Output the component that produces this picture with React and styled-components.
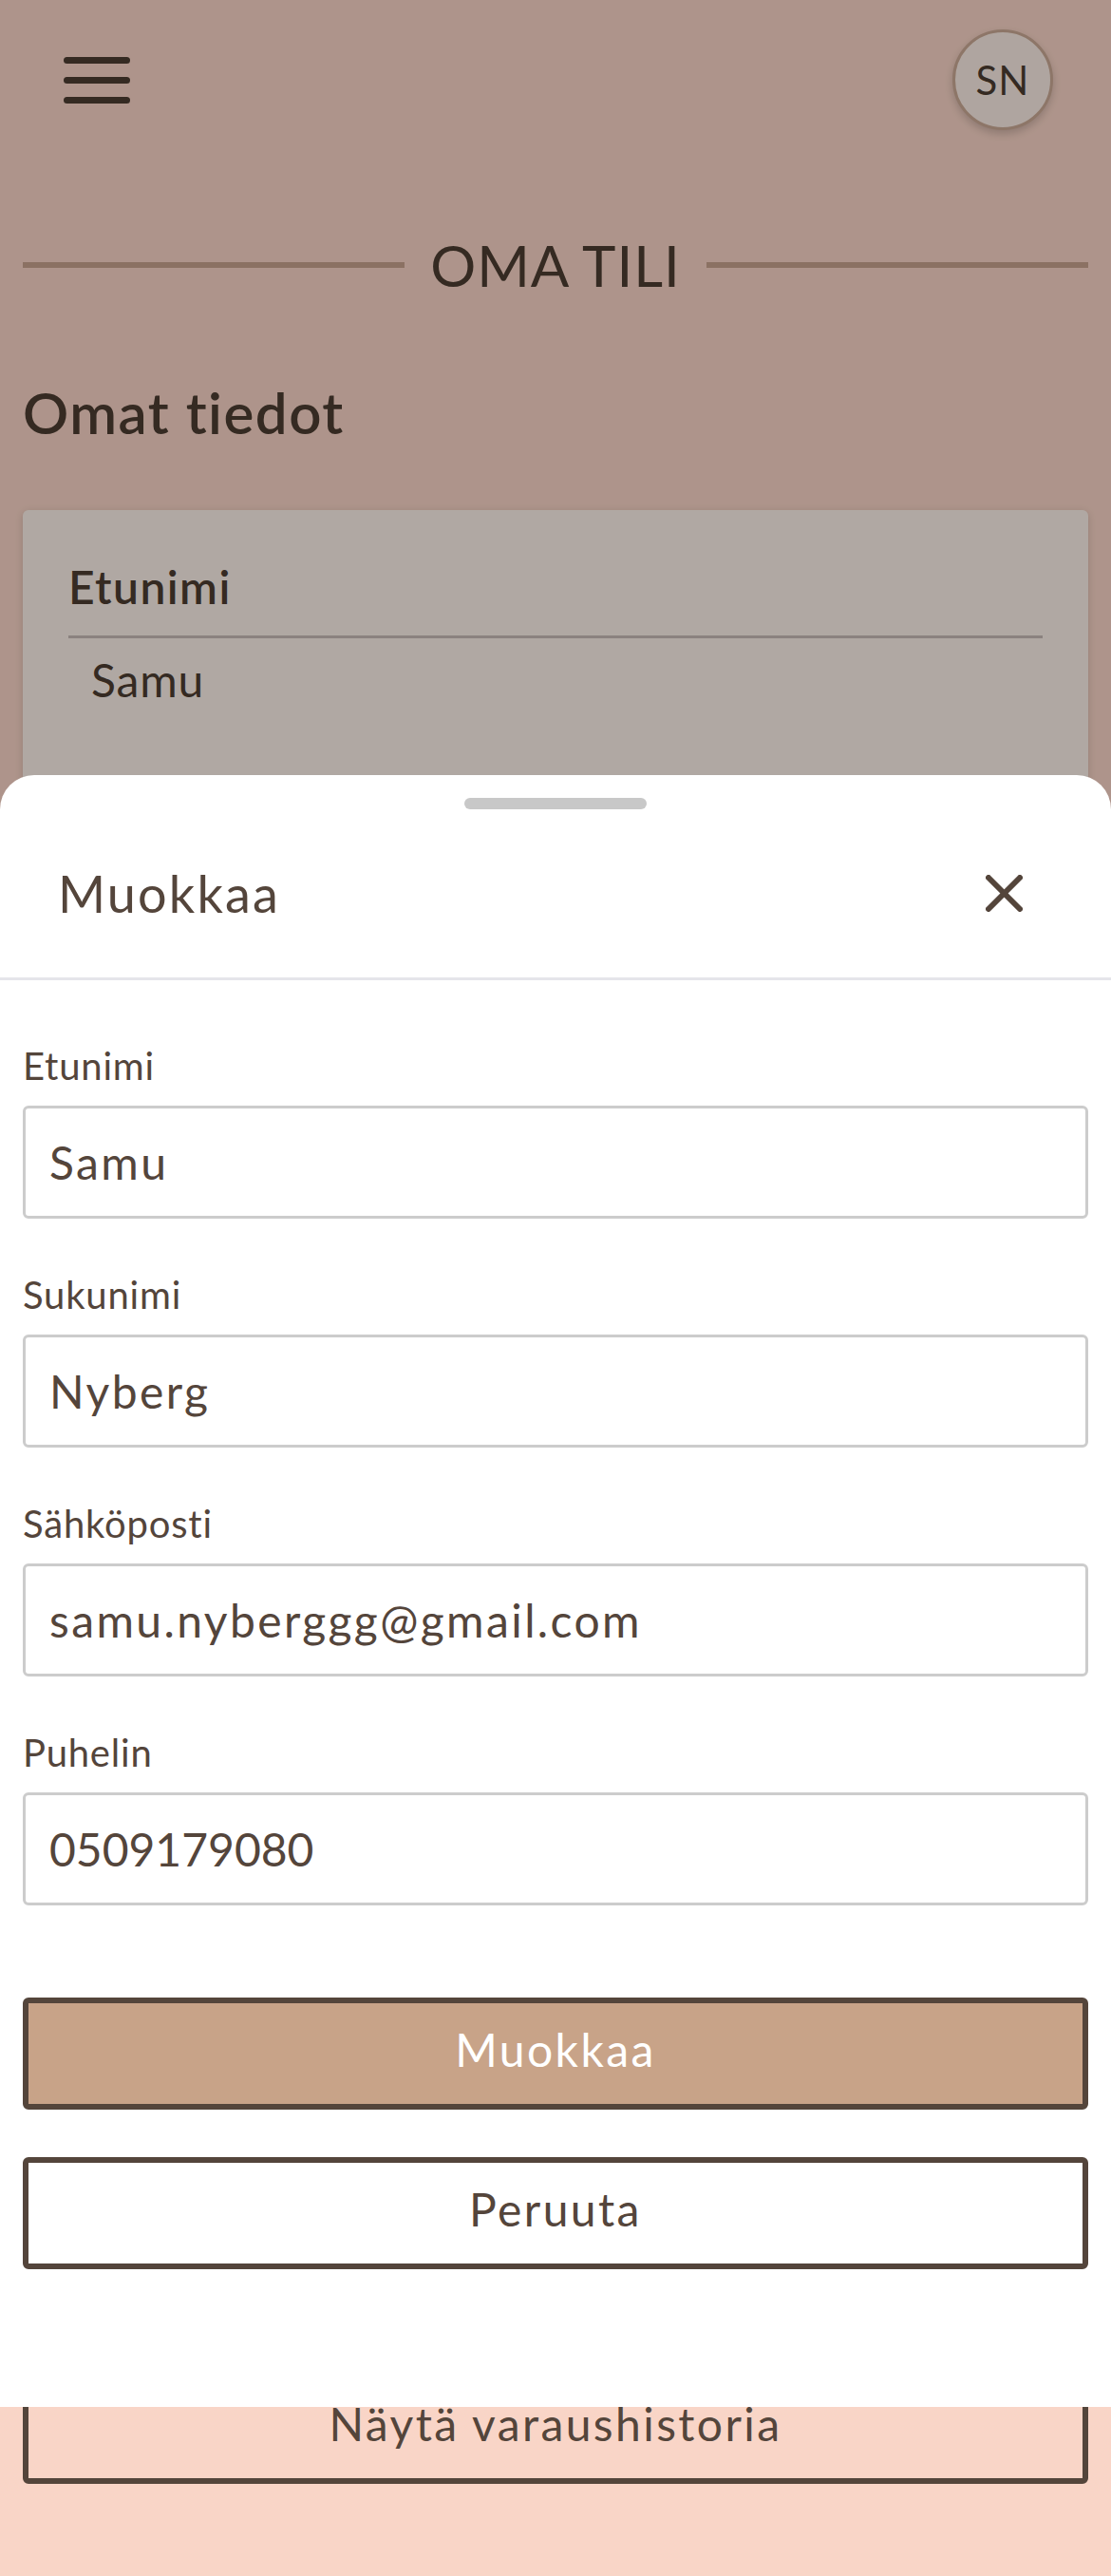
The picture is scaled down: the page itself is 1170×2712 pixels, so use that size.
import React from "react";
import styled, { createGlobalStyle } from "styled-components";

const GlobalStyle = createGlobalStyle`
  html, body { margin: 0; padding: 0; }
  * { box-sizing: border-box; }
  body {
    font-family: Lato, "Open Sans", "Noto Sans", sans-serif;
    background: #f9d5c7;
    color: #4c3d32;
    letter-spacing: 0.05em;
  }
`;

const Page = styled.div`
  position: relative;
  min-height: 2712px;
  display: flex;
  flex-direction: column;
  padding: 0 24px 97px;
`;

const Header = styled.header`
  display: flex;
  align-items: center;
  justify-content: space-between;
  padding: 31px 37px 0 43px;
`;

const IconButton = styled.button`
  display: flex;
  align-items: center;
  justify-content: center;
  padding: 0;
  border: none;
  background: transparent;
  color: ${(p) => p.$color || "#4c3d32"};
  cursor: pointer;
`;

const Avatar = styled.div`
  width: 106px;
  height: 106px;
  border-radius: 50%;
  background: #fbede5;
  border: 3px solid #cba995;
  box-shadow: 0 4px 8px rgba(0, 0, 0, 0.18);
  display: flex;
  align-items: center;
  justify-content: center;
  font-size: 42px;
  color: #4c3d32;
  letter-spacing: 1px;
`;

const TitleRow = styled.div`
  margin-top: 106px;
  display: flex;
  align-items: center;
  gap: 27px;
`;

const TitleLine = styled.span`
  flex: 1;
  height: 6px;
  background: #c7a38f;
`;

const PageTitle = styled.h1`
  margin: 0;
  font-size: 60px;
  line-height: 72px;
  font-weight: 400;
  letter-spacing: 1px;
  color: #4c3d32;
`;

const SectionHeading = styled.h2`
  margin: 83px 0 0;
  font-size: 60px;
  line-height: 72px;
  font-weight: 600;
  letter-spacing: 0.025em;
  color: #4c3d32;
`;

const InfoCard = styled.section`
  margin-top: 67px;
  background: #fdf1ea;
  border-radius: 6px;
  box-shadow: 0 2px 8px rgba(0, 0, 0, 0.15);
  padding: 52px 48px;
`;

const InfoField = styled.div`
  & + & {
    margin-top: 120px;
  }
`;

const InfoLabel = styled.div`
  font-size: 48px;
  line-height: 58px;
  font-weight: 600;
  letter-spacing: 0.03em;
  color: #4c3d32;
`;

const InfoDivider = styled.div`
  height: 3px;
  background: #c8bbb7;
  margin: 22px 0 16px;
`;

const InfoValue = styled.div`
  font-size: 48px;
  line-height: 56px;
  padding-left: 24px;
  color: #4c3d32;
`;

const OutlineButton = styled.button`
  width: 100%;
  height: 118px;
  border: 6px solid #54453b;
  border-radius: 6px;
  background: ${(p) => p.$bg || "transparent"};
  color: ${(p) => p.$fg || "#54453b"};
  font-family: inherit;
  font-size: 48px;
  letter-spacing: 0.05em;
  line-height: 1;
  padding: 0 0 8px;
  cursor: pointer;
`;

const BottomAction = styled.div`
  margin-top: auto;
`;

const Overlay = styled.div`
  position: absolute;
  top: 0;
  left: 0;
  right: 0;
  height: 2534px;
  background: rgba(0, 0, 0, 0.3);
  display: flex;
  flex-direction: column;
  justify-content: flex-end;
`;

const Sheet = styled.div`
  background: #ffffff;
  border-radius: 36px 36px 0 0;
  color: #54453b;
`;

const Handle = styled.div`
  width: 192px;
  height: 12px;
  border-radius: 6px;
  background: #c8c8c8;
  margin: 24px auto 0;
`;

const SheetHeader = styled.div`
  height: 180px;
  display: flex;
  align-items: center;
  justify-content: space-between;
  padding: 0 93px 0 61px;
  border-bottom: 3px solid #e5e5ea;
`;

const SheetTitle = styled.h3`
  margin: 0;
  font-size: 54px;
  line-height: 64px;
  font-weight: 400;
  letter-spacing: 0.04em;
  color: #54453b;
`;

const Form = styled.form`
  padding: 66px 24px 145px;
`;

const Field = styled.label`
  display: block;
  & + & {
    margin-top: 56px;
  }
`;

const FieldLabel = styled.span`
  display: block;
  font-size: 40px;
  line-height: 48px;
  margin-bottom: 18px;
  color: #54453b;
`;

const TextInput = styled.input`
  display: block;
  width: 100%;
  height: 119px;
  border: 3px solid #cccccc;
  border-radius: 6px;
  padding: 0 25px;
  font-family: inherit;
  font-size: 48px;
  letter-spacing: ${(p) => (p.$numeric ? "0" : "0.05em")};
  color: #54453b;
  background: #ffffff;
  outline: none;
`;

const Actions = styled.div`
  margin-top: 97px;
  display: flex;
  flex-direction: column;
  gap: 50px;
`;

const MenuIcon = () => (
  <svg width="70" height="49" viewBox="0 0 70 49" fill="none">
    <g stroke="currentColor" strokeWidth="7" strokeLinecap="round">
      <line x1="3.5" y1="3.5" x2="66.5" y2="3.5" />
      <line x1="3.5" y1="24.5" x2="66.5" y2="24.5" />
      <line x1="3.5" y1="45.5" x2="66.5" y2="45.5" />
    </g>
  </svg>
);

const CloseIcon = () => (
  <svg width="39" height="39" viewBox="0 0 39 39" fill="none">
    <g stroke="currentColor" strokeWidth="6" strokeLinecap="round">
      <line x1="3" y1="3" x2="36" y2="36" />
      <line x1="36" y1="3" x2="3" y2="36" />
    </g>
  </svg>
);

const profile = [
  { label: "Etunimi", value: "Samu" },
  { label: "Sukunimi", value: "Nyberg" },
  { label: "Sähköposti", value: "samu.nyberggg@gmail.com" },
  { label: "Puhelin", value: "0509179080", numeric: true },
];

export default function App() {
  return (
    <>
      <GlobalStyle />
      <Page>
        <Header>
          <IconButton aria-label="Valikko">
            <MenuIcon />
          </IconButton>
          <Avatar>SN</Avatar>
        </Header>

        <TitleRow>
          <TitleLine />
          <PageTitle>OMA TILI</PageTitle>
          <TitleLine />
        </TitleRow>

        <SectionHeading>Omat tiedot</SectionHeading>

        <InfoCard>
          {profile.map((f) => (
            <InfoField key={f.label}>
              <InfoLabel>{f.label}</InfoLabel>
              <InfoDivider />
              <InfoValue>{f.value}</InfoValue>
            </InfoField>
          ))}
        </InfoCard>

        <BottomAction>
          <OutlineButton>Näytä varaushistoria</OutlineButton>
        </BottomAction>

        <Overlay>
          <Sheet>
            <Handle />
            <SheetHeader>
              <SheetTitle>Muokkaa</SheetTitle>
              <IconButton $color="#54453b" aria-label="Sulje">
                <CloseIcon />
              </IconButton>
            </SheetHeader>
            <Form onSubmit={(e) => e.preventDefault()}>
              {profile.map((f) => (
                <Field key={f.label}>
                  <FieldLabel>{f.label}</FieldLabel>
                  <TextInput defaultValue={f.value} $numeric={f.numeric} />
                </Field>
              ))}
              <Actions>
                <OutlineButton type="submit" $bg="#c8a388" $fg="#ffffff">
                  Muokkaa
                </OutlineButton>
                <OutlineButton type="button" $bg="#ffffff">
                  Peruuta
                </OutlineButton>
              </Actions>
            </Form>
          </Sheet>
        </Overlay>
      </Page>
    </>
  );
}
